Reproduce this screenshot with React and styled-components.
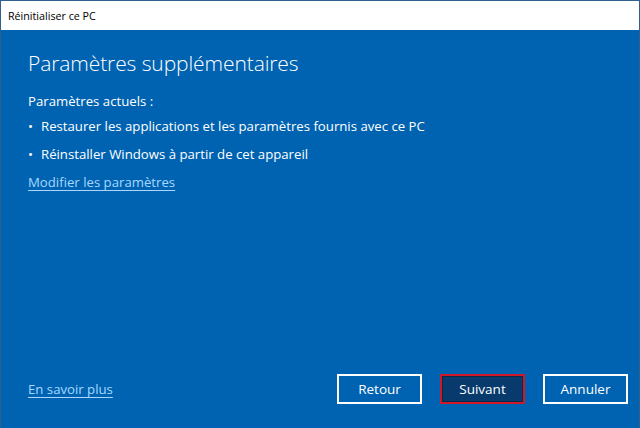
import React from "react";
import styled, { createGlobalStyle } from "styled-components";

const GlobalStyle = createGlobalStyle`
  html, body {
    margin: 0;
    padding: 0;
    background: #0063b1;
  }
  * {
    box-sizing: border-box;
  }
`;

const App = () => {
  return (
    <>
      <GlobalStyle />
      <Window>
        <TitleBar>Réinitialiser ce PC</TitleBar>
        <Body>
          <Main>
            <Heading>Paramètres supplémentaires</Heading>
            <Label>Paramètres actuels :</Label>
            <List>
              <Item>Restaurer les applications et les paramètres fournis avec ce PC</Item>
              <Item>Réinstaller Windows à partir de cet appareil</Item>
            </List>
            <Link href="#">Modifier les paramètres</Link>
          </Main>
          <Footer>
            <Link href="#">En savoir plus</Link>
            <Buttons>
              <Button>Retour</Button>
              <Button primary>Suivant</Button>
              <Button>Annuler</Button>
            </Buttons>
          </Footer>
        </Body>
      </Window>
    </>
  );
};

export default App;

const Window = styled.div`
  width: 640px;
  height: 428px;
  display: flex;
  flex-direction: column;
  border: 1px solid #2f5f8c;
  border-bottom: 0;
  background: #0063b1;
  font-family: "Segoe UI", "Open Sans", sans-serif;
  color: #ffffff;
  overflow: hidden;
`;

const TitleBar = styled.div`
  height: 29px;
  flex-shrink: 0;
  display: flex;
  align-items: center;
  padding-left: 7px;
  background: #ffffff;
  color: #000000;
  font-size: 10.7px;
`;

const Body = styled.div`
  flex: 1;
  display: flex;
  flex-direction: column;
  justify-content: space-between;
  padding: 18px 11px 24px 27px;
`;

const Main = styled.div`
  display: flex;
  flex-direction: column;
  align-items: flex-start;
`;

const Heading = styled.h1`
  margin: 0 0 13px;
  font-size: 21px;
  font-weight: 300;
  line-height: 30px;
  letter-spacing: -0.1px;
`;

const Label = styled.div`
  font-size: 13.2px;
  line-height: 20px;
`;

const List = styled.ul`
  margin: 5px 0 0;
  padding: 0;
  list-style: none;
  display: flex;
  flex-direction: column;
  gap: 8px;
`;

const Item = styled.li`
  position: relative;
  padding-left: 13px;
  font-size: 13.2px;
  line-height: 20px;

  &::before {
    content: "•";
    position: absolute;
    left: 0;
  }
`;

const Link = styled.a`
  margin-top: 8px;
  font-size: 13.2px;
  line-height: 20px;
  color: #a6d8ff;
  text-decoration: underline;
  text-underline-offset: 3px;
`;

const Footer = styled.div`
  display: flex;
  align-items: center;
  justify-content: space-between;

  ${Link} {
    margin-top: 0;
  }
`;

const Buttons = styled.div`
  display: flex;
  gap: 18px;
`;

const Button = styled.button`
  width: 85px;
  height: 30px;
  padding: 0;
  font-family: inherit;
  font-size: 13.5px;
  color: #ffffff;
  background: ${(p) => (p.primary ? "#083a6e" : "transparent")};
  border: 2px solid ${(p) => (p.primary ? "#d0182a" : "#ffffff")};
  box-shadow: ${(p) => (p.primary ? "inset 0 0 0 1px #0b2a4a" : "none")};
  cursor: pointer;
`;
